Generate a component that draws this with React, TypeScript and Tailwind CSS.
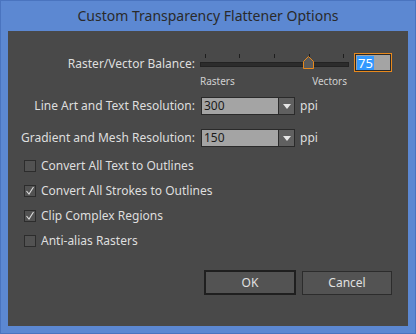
import { useState } from 'react';

const font = { fontFamily: '"Segoe UI", "Noto Sans", "Open Sans", sans-serif' };

function Slider() {
  const ticks = [5, 39, 74, 109, 143];
  return (
    <svg width="150" height="16" viewBox="0 0 150 16" className="block">
      {ticks.map((x) => (
        <rect key={x} x={x} y={1} width={1} height={4} fill="#1e1e1e" />
      ))}
      <rect x={0.5} y={9.5} width={148} height={4} fill="#2c2c2c" stroke="#232323" />
      <polygon
        points="103.5,15.5 103.5,8.5 108.5,3.5 113.5,8.5 113.5,15.5"
        fill="#5a5a5a"
        stroke="#e8891c"
      />
    </svg>
  );
}

function Dropdown({ value }: { value: string }) {
  return (
    <div className="flex h-[18px] w-[94px] border border-[#2a2a2a] bg-[#a4a4a4]">
      <div className="flex flex-1 items-center pl-[2px] text-[12px] leading-none text-[#1b1b1b]">{value}</div>
      <div className="flex w-[16px] items-center justify-center border-l border-[#2a2a2a] bg-[#606060]">
        <svg width="8" height="5" viewBox="0 0 8 5">
          <polygon points="0,0 8,0 4,5" fill="#e6e6e6" />
        </svg>
      </div>
    </div>
  );
}

function Check({ label, checked }: { label: string; checked: boolean }) {
  return (
    <div className="flex h-[25px] items-center pl-[16px]">
      <div className="flex h-[12px] w-[12px] items-center justify-center border border-[#2c2c2c] bg-[#525252]">
        {checked && (
          <svg width="10" height="10" viewBox="0 0 10 10">
            <polyline points="1.5,5 4,8 8.5,1" fill="none" stroke="#dcdcdc" strokeWidth="1.1" />
          </svg>
        )}
      </div>
      <span className="ml-[5px] text-[12px] text-[#dedede]">{label}</span>
    </div>
  );
}

export default function App() {
  const [checks] = useState([
    { label: 'Convert All Text to Outlines', checked: false },
    { label: 'Convert All Strokes to Outlines', checked: true },
    { label: 'Clip Complex Regions', checked: true },
    { label: 'Anti-alias Rasters', checked: false },
  ]);

  return (
    <div style={font} className="flex h-[334px] w-[416px] flex-col border border-[#4a74bf] bg-[#5c88d2]">
      <div className="flex h-[30px] items-center justify-center pb-[1px] text-[14px] text-[#2a2a2a]">
        Custom Transparency Flattener Options
      </div>
      <div className="mx-[7px] mb-[7px] flex-1 bg-[#494949] pt-[22px] text-[#dedede]">
        {/* raster / vector balance */}
        <div className="flex items-start">
          <div className="w-[187px] pt-[3px] text-right text-[12px] leading-[16px]">Raster/Vector Balance:</div>
          <div className="ml-[5px] w-[150px]">
            <Slider />
            <div className="mt-[6px] flex justify-between pr-[3px] text-[10px] leading-[12px] text-[#d0d0d0]">
              <span>Rasters</span>
              <span>Vectors</span>
            </div>
          </div>
          <div className="ml-[4px] flex h-[19px] w-[38px] items-center border border-[#e8891c] bg-[#a4a4a4] pl-[2px] shadow-[inset_0_0_0_1px_#2a2a2a]">
            <span className="bg-[#3399ff] px-[1px] text-[13px] leading-[14px] text-white">75</span>
          </div>
        </div>

        {/* resolutions */}
        <div className="mt-[10px] flex h-[18px] items-center">
          <div className="w-[187px] text-right text-[12px]">Line Art and Text Resolution:</div>
          <div className="ml-[6px]">
            <Dropdown value="300" />
          </div>
          <span className="ml-[5px] text-[12px]">ppi</span>
        </div>
        <div className="mt-[14px] flex h-[18px] items-center">
          <div className="w-[187px] text-right text-[12px]">Gradient and Mesh Resolution:</div>
          <div className="ml-[6px]">
            <Dropdown value="150" />
          </div>
          <span className="ml-[5px] text-[12px]">ppi</span>
        </div>

        {/* options */}
        <div className="mt-[6px]">
          {checks.map((c) => (
            <Check key={c.label} label={c.label} checked={c.checked} />
          ))}
        </div>

        {/* buttons */}
        <div className="mt-[17px] flex items-start justify-end gap-[6px] pr-[16px]">
          <button className="h-[25px] w-[92px] border-2 border-[#1f1f1f] bg-[#535353] text-[12px] text-[#e0e0e0]">
            OK
          </button>
          <button className="mt-[1px] h-[24px] w-[90px] border border-[#2c2c2c] bg-[#535353] text-[12px] text-[#e0e0e0]">
            Cancel
          </button>
        </div>
      </div>
    </div>
  );
}
